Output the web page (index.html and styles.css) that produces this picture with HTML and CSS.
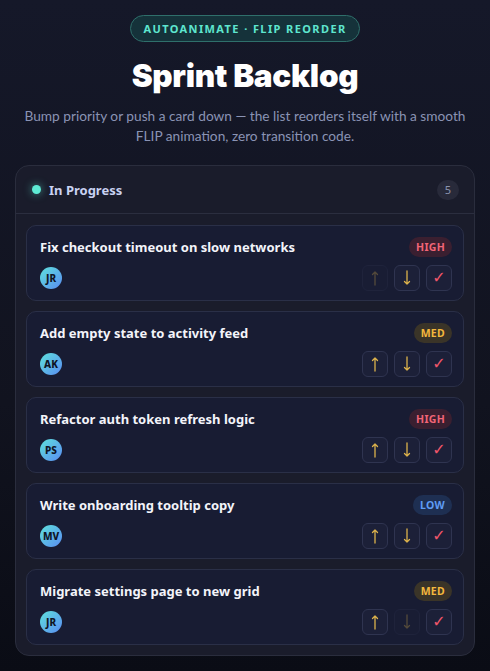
FILE: index.html
```html
<!DOCTYPE html>
<html lang="en">
<head>
<meta charset="utf-8">
<title>Sprint Backlog</title>
<link rel="stylesheet" href="styles.css">
</head>
<body>
<main class="page">
  <div class="eyebrow">AUTOANIMATE · FLIP REORDER</div>
  <h1 class="title">Sprint Backlog</h1>
  <p class="subtitle">Bump priority or push a card down — the list reorders itself with a smooth FLIP animation, zero transition code.</p>

  <section class="panel">
    <header class="panel-head">
      <span class="dot"></span>
      <span class="panel-title">In Progress</span>
      <span class="count">5</span>
    </header>
    <ul class="list">
      <li class="card">
        <div class="card-top"><span class="card-title">Fix checkout timeout on slow networks</span><span class="tag high">HIGH</span></div>
        <div class="card-bottom"><span class="avatar">JR</span>
          <div class="actions">
            <button class="btn up" disabled><svg viewBox="0 0 12 16"><path d="M6 15V2M3.5 4.5L6 2l2.5 2.5"/></svg></button>
            <button class="btn down"><svg viewBox="0 0 12 16"><path d="M6 1v13M3.5 11.5L6 14l2.5-2.5"/></svg></button>
            <button class="btn done">✓</button>
          </div>
        </div>
      </li>
      <li class="card">
        <div class="card-top"><span class="card-title">Add empty state to activity feed</span><span class="tag med">MED</span></div>
        <div class="card-bottom"><span class="avatar">AK</span>
          <div class="actions">
            <button class="btn up"><svg viewBox="0 0 12 16"><path d="M6 15V2M3.5 4.5L6 2l2.5 2.5"/></svg></button>
            <button class="btn down"><svg viewBox="0 0 12 16"><path d="M6 1v13M3.5 11.5L6 14l2.5-2.5"/></svg></button>
            <button class="btn done">✓</button>
          </div>
        </div>
      </li>
      <li class="card">
        <div class="card-top"><span class="card-title">Refactor auth token refresh logic</span><span class="tag high">HIGH</span></div>
        <div class="card-bottom"><span class="avatar">PS</span>
          <div class="actions">
            <button class="btn up"><svg viewBox="0 0 12 16"><path d="M6 15V2M3.5 4.5L6 2l2.5 2.5"/></svg></button>
            <button class="btn down"><svg viewBox="0 0 12 16"><path d="M6 1v13M3.5 11.5L6 14l2.5-2.5"/></svg></button>
            <button class="btn done">✓</button>
          </div>
        </div>
      </li>
      <li class="card">
        <div class="card-top"><span class="card-title">Write onboarding tooltip copy</span><span class="tag low">LOW</span></div>
        <div class="card-bottom"><span class="avatar">MV</span>
          <div class="actions">
            <button class="btn up"><svg viewBox="0 0 12 16"><path d="M6 15V2M3.5 4.5L6 2l2.5 2.5"/></svg></button>
            <button class="btn down"><svg viewBox="0 0 12 16"><path d="M6 1v13M3.5 11.5L6 14l2.5-2.5"/></svg></button>
            <button class="btn done">✓</button>
          </div>
        </div>
      </li>
      <li class="card">
        <div class="card-top"><span class="card-title">Migrate settings page to new grid</span><span class="tag med">MED</span></div>
        <div class="card-bottom"><span class="avatar">JR</span>
          <div class="actions">
            <button class="btn up"><svg viewBox="0 0 12 16"><path d="M6 15V2M3.5 4.5L6 2l2.5 2.5"/></svg></button>
            <button class="btn down" disabled><svg viewBox="0 0 12 16"><path d="M6 1v13M3.5 11.5L6 14l2.5-2.5"/></svg></button>
            <button class="btn done">✓</button>
          </div>
        </div>
      </li>
    </ul>
  </section>
</main>
</body>
</html>
```
FILE: styles.css
```css
* { box-sizing: border-box; }
html, body { margin: 0; padding: 0; }
body {
  min-height: 671px;
  background: linear-gradient(180deg, #151829 0%, #11131f 60%, #0a0c15 100%);
  font-family: "Noto Sans", "Open Sans", sans-serif;
  color: #e6e9f5;
}
.page {
  display: flex;
  flex-direction: column;
  align-items: center;
  padding: 15px 15px 0;
}
.eyebrow {
  height: 27px;
  padding: 0 12px;
  display: flex;
  align-items: center;
  border: 1px solid #2f6f6b;
  background: #15323a;
  border-radius: 14px;
  color: #5ee6cf;
  font-size: 11px;
  font-weight: 700;
  letter-spacing: 1.4px;
}
.title {
  margin: 14px 0 0;
  font-family: "Inter", "Noto Sans", sans-serif;
  font-weight: 900;
  font-size: 31.5px;
  line-height: 40px;
  color: #ffffff;
  letter-spacing: -0.3px;
}
.subtitle {
  margin: 10px 0 0;
  max-width: 460px;
  text-align: center;
  color: #8a93b4;
  font-family: "Lato", "Noto Sans", sans-serif;
  font-size: 13.7px;
  line-height: 20px;
}
.panel {
  margin-top: 19px;
  width: 460px;
  background: #1a1c2b;
  border: 1px solid #2a2d3d;
  border-radius: 14px;
}
.panel-head {
  display: flex;
  align-items: center;
  height: 48px;
  padding: 0 15px 0 16px;
  border-bottom: 1px solid #2b2e3f;
}
.dot {
  width: 9px;
  height: 9px;
  border-radius: 50%;
  background: #5eead4;
  box-shadow: 0 0 8px rgba(94, 234, 212, 0.6);
  margin-right: 8px;
}
.panel-title {
  flex: 1;
  font-weight: 700;
  font-size: 13px;
  color: #c9d2f2;
}
.count {
  width: 22px;
  height: 20px;
  border-radius: 10px;
  background: #282a3a;
  color: #8c93ad;
  font-size: 11px;
  display: flex;
  align-items: center;
  justify-content: center;
}
.list {
  list-style: none;
  margin: 0;
  padding: 11px 10px 10px;
  display: flex;
  flex-direction: column;
  gap: 10px;
}
.card {
  height: 76px;
  background: #181c33;
  border: 1px solid #2a2f47;
  border-radius: 10px;
  padding: 11px 11px 9px 13px;
  display: flex;
  flex-direction: column;
  justify-content: space-between;
}
.card-top {
  display: flex;
  align-items: center;
  justify-content: space-between;
}
.card-title {
  font-size: 13px;
  font-weight: 700;
  color: #f3f4fa;
}
.tag {
  height: 20px;
  padding: 0 7px;
  border-radius: 10px;
  font-size: 10.5px;
  font-weight: 700;
  letter-spacing: 0.3px;
  display: flex;
  align-items: center;
}
.tag.high { background: #3a1f30; color: #f26577; }
.tag.med { background: #3a3428; color: #f5b83d; }
.tag.low { background: #1e2f52; color: #5f9cf5; }
.card-bottom {
  display: flex;
  align-items: center;
  justify-content: space-between;
}
.avatar {
  width: 22px;
  height: 22px;
  border-radius: 50%;
  background: linear-gradient(135deg, #5ee1dc 0%, #5a8cf2 100%);
  color: #0f1526;
  font-size: 10px;
  font-weight: 800;
  display: flex;
  align-items: center;
  justify-content: center;
}
.actions {
  display: flex;
  gap: 6px;
}
.btn {
  width: 26px;
  height: 26px;
  padding: 0;
  border-radius: 6px;
  border: 1px solid #2f3450;
  background: #1c2038;
  display: flex;
  align-items: center;
  justify-content: center;
}
.btn svg {
  width: 12px;
  height: 16px;
  fill: none;
  stroke: #dcb24c;
  stroke-width: 1.3;
  stroke-linecap: round;
  stroke-linejoin: round;
}
.btn.done {
  color: #f0566a;
  font-family: "DejaVu Sans", sans-serif;
  font-size: 16px;
  line-height: 1;
}
.btn:disabled { opacity: 0.3; }
```
